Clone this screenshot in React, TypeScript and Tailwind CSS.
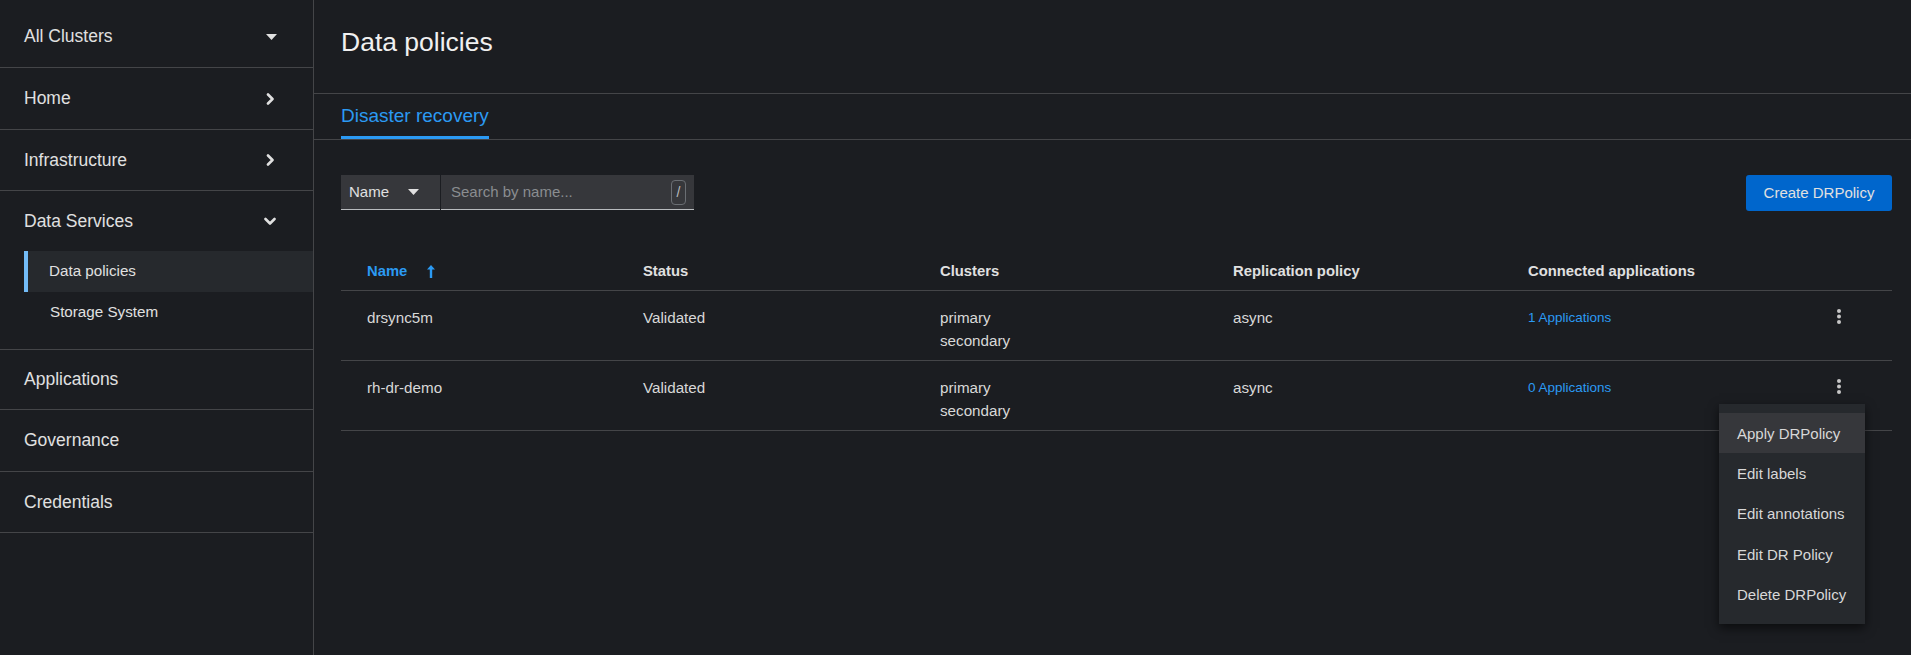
import React from 'react';

const navItems = [
  { label: 'Home', h: 'h-[62px]', icon: 'right' },
  { label: 'Infrastructure', h: 'h-[61px]', icon: 'right' },
];

const bottomNav = [
  { label: 'Applications', h: 'h-[60px]' },
  { label: 'Governance', h: 'h-[62px]' },
  { label: 'Credentials', h: 'h-[61px]' },
];

const policies = [
  { name: 'drsync5m', status: 'Validated', clusters: ['primary', 'secondary'], replication: 'async', apps: '1 Applications' },
  { name: 'rh-dr-demo', status: 'Validated', clusters: ['primary', 'secondary'], replication: 'async', apps: '0 Applications' },
];

const menuItems = ['Apply DRPolicy', 'Edit labels', 'Edit annotations', 'Edit DR Policy', 'Delete DRPolicy'];

const ChevronRight = () => (
  <svg width="9" height="12" viewBox="0 0 9 12" fill="none">
    <path d="M2 1.5 L6.5 6 L2 10.5" stroke="#e0e0e0" strokeWidth="2.6" strokeLinecap="round" strokeLinejoin="round" />
  </svg>
);

const ChevronDown = () => (
  <svg width="12" height="9" viewBox="0 0 12 9" fill="none">
    <path d="M1.5 2 L6 6.5 L10.5 2" stroke="#e0e0e0" strokeWidth="2.6" strokeLinecap="round" strokeLinejoin="round" />
  </svg>
);

const Caret = ({ color = '#e0e0e0' }: { color?: string }) => (
  <svg width="11" height="6" viewBox="0 0 11 6">
    <path d="M0 0 H11 L5.5 6 Z" fill={color} />
  </svg>
);

const Kebab = () => (
  <svg width="4" height="15" viewBox="0 0 4 15">
    <circle cx="2" cy="2" r="2" fill="#c7c7c7" />
    <circle cx="2" cy="7.5" r="2" fill="#c7c7c7" />
    <circle cx="2" cy="13" r="2" fill="#c7c7c7" />
  </svg>
);

const SortUp = () => (
  <svg width="8" height="13" viewBox="0 0 8 13">
    <path d="M4 0 L8 4.5 H5.2 V13 H2.8 V4.5 H0 Z" fill="#2b9af3" />
  </svg>
);

const App: React.FC = () => {
  return (
    <div className="flex h-[655px] w-full bg-[#1b1d21] font-['Liberation_Sans',Arial,sans-serif] text-[#e0e0e0]">
      {/* sidebar */}
      <aside className="w-[314px] shrink-0 border-r border-[#444548]">
        <div className="flex h-[68px] items-center justify-between border-b border-[#444548] pl-6 pr-[36px] pt-[6px] text-[17.5px]">
          <span>All Clusters</span>
          <Caret />
        </div>
        {navItems.map((item) => (
          <div
            key={item.label}
            className={`flex ${item.h} items-center justify-between border-b border-[#444548] pl-6 pr-[38px] text-[17.5px]`}
          >
            <span>{item.label}</span>
            <ChevronRight />
          </div>
        ))}
        <div className="h-[159px] border-b border-[#444548]">
          <div className="flex h-[60px] items-center justify-between pl-6 pr-[37px] text-[17.5px]">
            <span>Data Services</span>
            <ChevronDown />
          </div>
          <div className="ml-6 flex h-[41px] items-center border-l-4 border-[#73bcf7] bg-[#26292d] pl-[21px] text-[15.2px]">
            Data policies
          </div>
          <div className="flex h-[40px] items-center pl-[50px] text-[15.2px]">Storage System</div>
        </div>
        {bottomNav.map((item) => (
          <div key={item.label} className={`flex ${item.h} items-center border-b border-[#444548] pl-6 text-[17.5px]`}>
            {item.label}
          </div>
        ))}
      </aside>

      {/* main */}
      <main className="flex min-w-0 flex-1 flex-col">
        <div className="h-[94px] border-b border-[#444548] pl-[27px] pt-[26px]">
          <h1 className="text-[26.5px] leading-[32px] text-[#f0f0f0]">Data policies</h1>
        </div>
        <div className="flex h-[46px] border-b border-[#444548] pl-[27px]">
          <div className="flex flex-col justify-end">
            <span className="pb-[8px] text-[19px] leading-[24px] text-[#2b9af3]">Disaster recovery</span>
            <div className="h-[3px] bg-[#2b9af3]" />
          </div>
        </div>

        <div className="relative flex-1 pl-[27px] pr-[19px]">
          <div className="flex items-start justify-between pt-[35px]">
            <div className="flex gap-[1px]">
              <div className="flex h-[35px] w-[99px] items-center justify-between border-b border-[#b8bbbe] bg-[#36373b] pl-2 pr-[21px] text-[15px]">
                <span>Name</span>
                <Caret />
              </div>
              <div className="flex h-[35px] w-[253px] items-center justify-between border-b border-[#b8bbbe] bg-[#36373b] pl-[10px] pr-2 text-[15px]">
                <span className="text-[#8a8d90]">Search by name...</span>
                <span className="flex h-[25px] w-[15px] items-center justify-center rounded-[4px] border border-[#6a6e73] text-[14px] text-[#b8bbbe]">
                  /
                </span>
              </div>
            </div>
            <button className="h-[36px] w-[146px] rounded-[3px] bg-[#0066cc] text-[15px] text-[#e0e0e0]">Create DRPolicy</button>
          </div>

          {/* table */}
          <div className="mt-[39px] text-[15.2px]">
            <div className="grid h-[41px] grid-cols-[276px_297px_293px_295px_1fr_106px] items-center border-b border-[#444548] pt-[2px] text-[14.8px] font-semibold">
              <div className="flex items-center gap-[20px] pl-[26px] text-[#2b9af3]">
                <span>Name</span>
                <SortUp />
              </div>
              <div className="pl-[26px]">Status</div>
              <div className="pl-[26px]">Clusters</div>
              <div className="pl-[26px]">Replication policy</div>
              <div className="pl-[26px]">Connected applications</div>
              <div />
            </div>
            {policies.map((p, i) => (
              <div
                key={p.name}
                className="relative grid h-[70px] grid-cols-[276px_297px_293px_295px_1fr_106px] items-start border-b border-[#444548] pt-[15px] leading-[23px] text-[#d8d8d8]"
              >
                <div className="pl-[26px]">{p.name}</div>
                <div className="pl-[26px]">{p.status}</div>
                <div className="pl-[26px]">
                  {p.clusters.map((c) => (
                    <div key={c}>{c}</div>
                  ))}
                </div>
                <div className="pl-[26px]">{p.replication}</div>
                <div className="pl-[26px] text-[13.5px] text-[#2b9af3]">{p.apps}</div>
                <div className="flex justify-center pt-[3px]">
                  <Kebab />
                </div>
                {i === 1 && (
                  <div className="absolute right-[27px] top-[43px] z-10 w-[146px] bg-[#26292d] py-[9px] text-[15px] text-[#d8d8d8] shadow-[0_4px_10px_rgba(0,0,0,0.6)]">
                    {menuItems.map((m, j) => (
                      <div
                        key={m}
                        className={`flex h-[40.4px] items-center whitespace-nowrap pl-[18px] ${j === 0 ? 'bg-[#36373b]' : ''}`}
                      >
                        {m}
                      </div>
                    ))}
                  </div>
                )}
              </div>
            ))}
          </div>
        </div>
      </main>
    </div>
  );
};

export default App;
